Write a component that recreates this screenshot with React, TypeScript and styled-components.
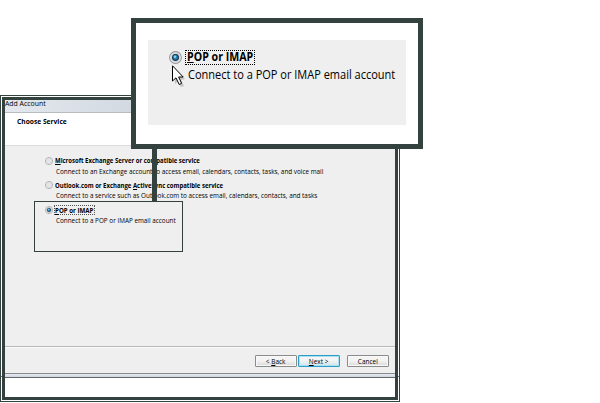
import React from 'react';
import styled, { createGlobalStyle } from 'styled-components';

const ink = '#33423f';

const Global = createGlobalStyle`
  body { margin: 0; background: #fff; overflow: hidden; font-family: "Open Sans", "Noto Sans", sans-serif; color: #000; }
  * { box-sizing: border-box; }
`;

const Canvas = styled.main`
  position: relative;
  width: 600px;
  height: 403px;
  padding-top: 95px;
`;

const Window = styled.section`
  width: 400px;
  height: 307px;
  border: 1px solid ${ink};
  padding: 1px;
  background: linear-gradient(#777d7e, #777d7e) 0 280px / 100% 1px no-repeat;
`;

const Frame = styled.div`
  height: 303px;
  border: 3px solid ${ink};
  display: flex;
  flex-direction: column;
  background: #fff;
`;

const Text = styled.span<{ $size: number; $squeeze?: number; $bold?: boolean; $center?: boolean }>`
  display: block;
  flex: none;
  font-size: ${p => p.$size}px;
  font-weight: ${p => (p.$bold ? 700 : 400)};
  white-space: nowrap;
  line-height: 1;
  transform: scaleX(${p => p.$squeeze ?? 1});
  transform-origin: ${p => (p.$center ? 'center' : 'left')};
  u { text-decoration-thickness: 1px; text-underline-offset: 1px; }
`;

const TitleBar = styled.header`
  height: 13px;
  display: flex;
  align-items: flex-start;
  background: linear-gradient(90deg, #e4e8ee, #cfd6de 40%);
  border-bottom: 1px solid #b9bcbe;
`;

const Heading = styled.div`
  height: 33px;
  padding: 5px 0 0 12px;
  border-bottom: 1px solid #dcdcdc;
`;

const Services = styled.div`
  height: 200px;
  padding: 9.7px 0 0 40px;
  background: #efefef;
`;

const Option = styled.div`
  height: 24.8px;
  display: grid;
  grid-template-columns: 10px 1fr;
  grid-template-rows: 10px 11px;
  align-items: center;
`;

const Choice = styled.div<{ $focus?: boolean }>`
  display: flex;
  align-items: center;
  justify-self: start;
  width: ${p => (p.$focus ? '39px' : 'auto')};
  height: 8px;
  outline: ${p => (p.$focus ? '1px dotted #555' : 'none')};
`;

const Detail = styled.div`
  grid-column: 2;
  display: flex;
  padding-left: 1px;
`;

const Footer = styled.footer`
  height: 28px;
  border-top: 1px solid #b7b7b7;
  border-bottom: 1px solid #85898c;
  background: #efefef;
  box-shadow: inset 0 1px #fafafa;
  display: flex;
  justify-content: flex-end;
  padding: 8px 6px 0 0;
  gap: 1px;
`;

const Button = styled.button<{ $primary?: boolean; $apart?: boolean }>`
  width: 42px;
  height: 12px;
  padding: 0;
  margin-left: ${p => (p.$apart ? 6 : 0)}px;
  display: flex;
  align-items: center;
  justify-content: center;
  border: 1px solid ${p => (p.$primary ? '#2c9dc6' : '#8b8b8b')};
  border-radius: 1px;
  background: linear-gradient(#f4f4f4 45%, ${p => (p.$primary ? '#d3e3eb' : '#d9d9d9')});
  box-shadow: inset 0 0 0 1px ${p => (p.$primary ? '#a9e0f2' : '#f8f8f8')};
  font-family: inherit;
  color: #000;
`;

const Shelf = styled.div`
  height: 4px;
  background: linear-gradient(#e8ebf3, #ced4df);
  border-bottom: 1px solid #62686a;
`;

const Selection = styled.div`
  position: absolute;
  left: 34px;
  top: 201px;
  width: 149px;
  height: 51px;
  border: 1px solid ${ink};
`;

const Connector = styled.div`
  position: absolute;
  left: 152px;
  top: 149px;
  width: 5px;
  height: 53px;
  background: ${ink};
`;

const Callout = styled.aside`
  position: absolute;
  left: 131px;
  top: 18px;
  width: 292px;
  height: 131px;
  border: 5px solid ${ink};
  padding: 17px 12px;
  background: #fff;
`;

const Magnified = styled.div`
  height: 85px;
  padding: 9px 0 0 21px;
  background: #efefef;
  display: grid;
  grid-template-columns: 16px 1fr;
  grid-template-rows: 16px 20px;
  align-items: center;
  align-content: start;
`;

const BigLabel = styled.div`
  display: flex;
  align-items: center;
  justify-self: start;
  width: 70px;
  height: 15px;
  padding-left: 1px;
  border: 1px dotted #000;
`;

const BigDetail = styled.div`
  grid-column: 2;
  display: flex;
  padding-left: 3px;
`;

const Pointer = styled.svg`
  position: absolute;
  left: 36px;
  top: 42px;
`;

function Radio({ size, on }: { size: number; on?: boolean }) {
  return (
    <svg width={size} height={size} viewBox="0 0 12 12">
      <circle cx="6" cy="6" r="5.4" fill="#f8f8f8" stroke="#929597" strokeWidth="1" />
      <circle cx="6" cy="6" r="4" fill="#e4e6e7" stroke="#c3c6c8" strokeWidth=".6" />
      {on && <circle cx="6" cy="6" r="2.7" fill="#247eb0" stroke="#163451" strokeWidth="1" />}
      {on && <circle cx="5.5" cy="5.3" r="1.2" fill="#83d3ee" />}
    </svg>
  );
}

export default function App() {
  return (
    <Canvas>
      <Global />
      <Window>
        <Frame>
          <TitleBar><Text $size={7.5} $squeeze={0.92}>Add Account</Text></TitleBar>
          <Heading><Text $size={7.5} $bold $squeeze={0.89}>Choose Service</Text></Heading>
          <Services>
            <Option>
              <Radio size={8} />
              <Choice><Text $size={7.25} $bold $squeeze={0.825}><u>M</u>icrosoft Exchange Server or compatible service</Text></Choice>
              <Detail><Text $size={7} $squeeze={0.908}>Connect to an Exchange account to access email, calendars, contacts, tasks, and voice mail</Text></Detail>
            </Option>
            <Option>
              <Radio size={8} />
              <Choice><Text $size={7.25} $bold $squeeze={0.825}>Outlook.com or Exchange <u>A</u>ctiveSync compatible service</Text></Choice>
              <Detail><Text $size={7} $squeeze={0.908}>Connect to a service such as Outlook.com to access email, calendars, contacts, and tasks</Text></Detail>
            </Option>
            <Option>
              <Radio size={8} on />
              <Choice $focus><Text $size={7.25} $bold $squeeze={0.85}><u>P</u>OP or IMAP</Text></Choice>
              <Detail><Text $size={7} $squeeze={0.908}>Connect to a POP or IMAP email account</Text></Detail>
            </Option>
          </Services>
          <Footer>
            <Button><Text $center $size={7} $squeeze={0.92}>&lt; <u>B</u>ack</Text></Button>
            <Button $primary><Text $center $size={7} $squeeze={0.92}><u>N</u>ext &gt;</Text></Button>
            <Button $apart><Text $center $size={7} $squeeze={0.92}>Cancel</Text></Button>
          </Footer>
          <Shelf />
        </Frame>
      </Window>
      <Selection />
      <Connector />
      <Callout>
        <Magnified>
          <Radio size={13} on />
          <BigLabel><Text $size={12} $bold $squeeze={0.885}><u>P</u>OP or IMAP</Text></BigLabel>
          <BigDetail><Text $size={12} $squeeze={0.917}>Connect to a POP or IMAP email account</Text></BigDetail>
        </Magnified>
        <Pointer width="13" height="22" viewBox="0 0 13 22">
          <path d="M2 3 L13 14 L9 15 L12 21 L9 22 L6 16 L3 19Z" fill="#aaa" opacity=".65" />
          <path d="M.5 .8 V16 L4 12.8 L7.2 19.5 L9.6 18.3 L6.6 12 H11.2 Z" fill="#fff" stroke="#000" strokeWidth="1" />
        </Pointer>
      </Callout>
    </Canvas>
  );
}
